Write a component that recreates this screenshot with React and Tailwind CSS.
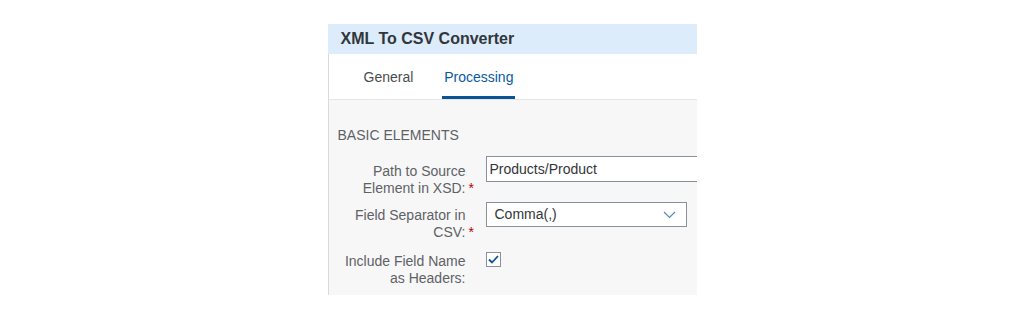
function Label({ lines, required, className = "" }) {
	return (
		<div className={`w-[138px] shrink-0 text-right text-[#5e6266] whitespace-nowrap ${className}`}>
			{lines.map((line, i) => (
				<div key={i} className="flex justify-end">
					<span>{line}</span>
					<span className="w-[10px] text-left pl-[3px] text-[#bb0000]">
						{required && i === lines.length - 1 ? "*" : ""}
					</span>
				</div>
			))}
		</div>
	);
}

export default function App() {
	return (
		<div className="min-h-[317px] bg-white pt-[24px] font-['Liberation_Sans',Arial,sans-serif]">
			<div className="mx-auto w-[369px] overflow-hidden">
				<div className="h-[30px] bg-[#dcecfa] pl-[13px] flex items-center text-[16px] font-bold text-[#32363a]">
					XML To CSV Converter
				</div>
				<div className="h-[46px] bg-white border-l border-[#d9d9d9] border-b border-b-[#e5e5e5] flex items-stretch pl-[35px] text-[14px]">
					<div className="flex items-center pt-[1px] text-[#4a4d50]">
						General
					</div>
					<div className="ml-[29px] w-[73px] flex items-center justify-center text-[#0a5a9f] border-b-[3px] border-[#0a5495] pt-[4px]">
						Processing
					</div>
				</div>
				<div className="bg-[#f7f7f7] border-l border-[#d9d9d9] pl-[9px] pt-[27px] pb-[8px] text-[14px] leading-[17px]">
					<div className="text-[#5e6266]">BASIC ELEMENTS</div>
					<div className="mt-[12px] flex h-[46px]">
						<Label className="mt-[7px]" lines={["Path to Source", "Element in XSD:"]} required />
						<div className="ml-[10px] shrink-0">
							<div className="w-[260px] h-[26px] border border-[#89919a] bg-white flex items-center pl-[3px] text-[#32363a]">
								Products/Product
							</div>
						</div>
					</div>
					<div className="flex h-[50px]">
						<Label className="mt-[5px]" lines={["Field Separator in", "CSV:"]} required />
						<div className="ml-[10px] shrink-0">
							<div className="w-[201px] h-[25px] border border-[#89919a] bg-white flex items-center justify-between pl-[8px] pr-[10px] text-[#32363a]">
								<span>Comma(,)</span>
								<svg width="13" height="8" viewBox="0 0 13 8" fill="none">
									<path d="M1 1l5.5 5.5L12 1" stroke="#5b8ab8" strokeWidth="1.2" />
								</svg>
							</div>
						</div>
					</div>
					<div className="flex">
						<Label className="mt-[1px]" lines={["Include Field Name", "as Headers:"]} />
						<div className="ml-[10px] shrink-0">
							<div className="w-[15px] h-[15px] border border-[#89919a] bg-white flex items-center justify-center">
								<svg width="11" height="9" viewBox="0 0 11 9" fill="none">
									<path d="M1 4.5l3 3L10 1" stroke="#0a5495" strokeWidth="1.8" />
								</svg>
							</div>
						</div>
					</div>
				</div>
			</div>
		</div>
	);
}
